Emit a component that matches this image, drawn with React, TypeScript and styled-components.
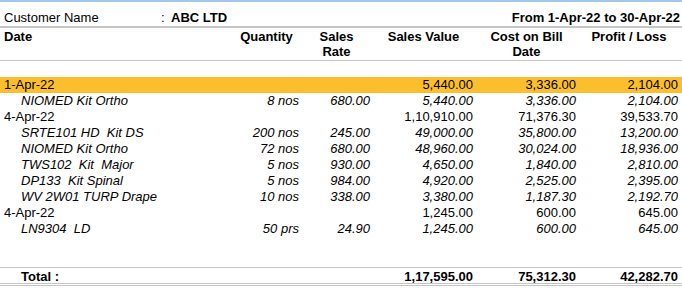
import React from "react";
import styled, { createGlobalStyle } from "styled-components";

const Global = createGlobalStyle`
  html, body { margin: 0; padding: 0; background: #fff; }
  body { font-family: "Liberation Sans", Arial, sans-serif; font-size: 13px; color: #000; }
`;

const COLS = "232px 69px 71px 103px 103px 102px";

const Page = styled.div`
  width: 682px;
  height: 291px;
  overflow: hidden;
  border-top: 2px solid #a4c8ea;
  box-sizing: border-box;
`;

const CustomerBar = styled.div`
  height: 26px;
  display: flex;
  align-items: flex-start;
  padding: 8px 2px 0 4px;
  box-sizing: border-box;
  line-height: 16px;
  border-bottom: 2px solid #c6c6c6;
`;

const CustLabel = styled.span`
  width: 157px;
`;

const Colon = styled.span`
  width: 10px;
`;

const CustName = styled.span`
  font-weight: bold;
  flex: 1;
`;

const Period = styled.span`
  font-weight: bold;
`;

const Header = styled.div`
  display: grid;
  grid-template-columns: ${COLS};
  height: 33px;
  padding-top: 1px;
  box-sizing: border-box;
  line-height: 15px;
  font-weight: bold;
  border-bottom: 1px solid #c6c6c6;
`;

const HeadCell = styled.div<{ $left?: boolean }>`
  text-align: ${(p) => (p.$left ? "left" : "center")};
  padding-left: ${(p) => (p.$left ? "4px" : "0")};
`;

const Spacer = styled.div<{ $h: number }>`
  height: ${(p) => p.$h}px;
`;

const Row = styled.div<{ $item?: boolean; $hl?: boolean }>`
  display: grid;
  grid-template-columns: ${COLS};
  height: 16px;
  line-height: 16px;
  font-style: ${(p) => (p.$item ? "italic" : "normal")};
  background: ${(p) => (p.$hl ? "#fbbf2e" : "transparent")};
  white-space: nowrap;
`;

const Label = styled.div<{ $indent?: boolean }>`
  padding-left: ${(p) => (p.$indent ? "21px" : "4px")};
`;

const Num = styled.div`
  text-align: right;
  padding-right: 2px;
`;

const TotalRow = styled.div`
  display: grid;
  grid-template-columns: ${COLS};
  height: 19px;
  box-sizing: border-box;
  line-height: 17px;
  font-weight: bold;
  border-top: 1px solid #c6c6c6;
  border-bottom: 3px double #c6c6c6;
`;

type Line = {
  label: string;
  item?: boolean;
  hl?: boolean;
  qty?: string;
  rate?: string;
  value: string;
  cost: string;
  profit: string;
};

const rows: Line[] = [
  { label: "1-Apr-22", hl: true, value: "5,440.00", cost: "3,336.00", profit: "2,104.00" },
  { label: "NIOMED Kit Ortho", item: true, qty: "8 nos", rate: "680.00", value: "5,440.00", cost: "3,336.00", profit: "2,104.00" },
  { label: "4-Apr-22", value: "1,10,910.00", cost: "71,376.30", profit: "39,533.70" },
  { label: "SRTE101 HD\u00a0 Kit DS", item: true, qty: "200 nos", rate: "245.00", value: "49,000.00", cost: "35,800.00", profit: "13,200.00" },
  { label: "NIOMED Kit Ortho", item: true, qty: "72 nos", rate: "680.00", value: "48,960.00", cost: "30,024.00", profit: "18,936.00" },
  { label: "TWS102\u00a0 Kit\u00a0 Major", item: true, qty: "5 nos", rate: "930.00", value: "4,650.00", cost: "1,840.00", profit: "2,810.00" },
  { label: "DP133\u00a0 Kit Spinal", item: true, qty: "5 nos", rate: "984.00", value: "4,920.00", cost: "2,525.00", profit: "2,395.00" },
  { label: "WV 2W01 TURP Drape", item: true, qty: "10 nos", rate: "338.00", value: "3,380.00", cost: "1,187.30", profit: "2,192.70" },
  { label: "4-Apr-22", value: "1,245.00", cost: "600.00", profit: "645.00" },
  { label: "LN9304\u00a0 LD", item: true, qty: "50 prs", rate: "24.90", value: "1,245.00", cost: "600.00", profit: "645.00" },
];

export default function App() {
  return (
    <Page>
      <Global />
      <CustomerBar>
        <CustLabel>Customer Name</CustLabel>
        <Colon>:</Colon>
        <CustName>ABC LTD</CustName>
        <Period>From 1-Apr-22 to 30-Apr-22</Period>
      </CustomerBar>
      <Header>
        <HeadCell $left>Date</HeadCell>
        <HeadCell>Quantity</HeadCell>
        <HeadCell>
          Sales
          <br />
          Rate
        </HeadCell>
        <HeadCell>Sales Value</HeadCell>
        <HeadCell>
          Cost on Bill
          <br />
          Date
        </HeadCell>
        <HeadCell>Profit / Loss</HeadCell>
      </Header>
      <Spacer $h={16} />
      {rows.map((r, i) => (
        <Row key={i} $item={r.item} $hl={r.hl}>
          <Label $indent={r.item}>{r.label}</Label>
          <Num>{r.qty ?? ""}</Num>
          <Num>{r.rate ?? ""}</Num>
          <Num>{r.value}</Num>
          <Num>{r.cost}</Num>
          <Num>{r.profit}</Num>
        </Row>
      ))}
      <Spacer $h={30} />
      <TotalRow>
        <Label $indent>Total :</Label>
        <Num />
        <Num />
        <Num>1,17,595.00</Num>
        <Num>75,312.30</Num>
        <Num>42,282.70</Num>
      </TotalRow>
    </Page>
  );
}
